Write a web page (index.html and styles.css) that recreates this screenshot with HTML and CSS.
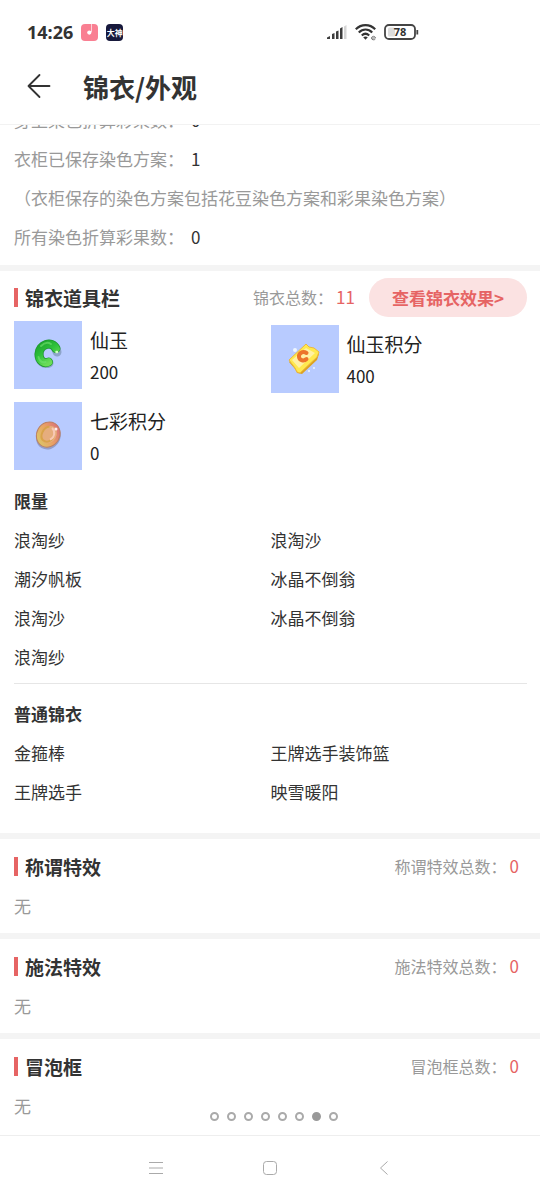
FILE: index.html
```html
<!DOCTYPE html>
<html lang="zh-CN">
<head>
<meta charset="utf-8">
<meta name="viewport" content="width=device-width, initial-scale=1">
<title>锦衣/外观</title>
<link rel="stylesheet" href="styles.css">
</head>
<body>
<div class="status">
  <span class="time">14:26</span>
  <svg class="app" viewBox="0 0 17 17" aria-hidden="true"><rect width="17" height="17" rx="4" fill="#f97f92"/><circle cx="8.3" cy="8.6" r="2.1" fill="#fff"/><path d="M10.5 0v8" stroke="#fff" stroke-width=".8" opacity=".8"/></svg>
  <span class="badge">大神</span>
  <div class="signals">
    <svg width="22" height="18" viewBox="0 0 22 18" aria-hidden="true"><g fill="#3c3c3c"><path d="M1 16v-1.500l3-1.500v3z"/><path d="M6 16v-5l2.500-1v6zM10 16V8.500l2.500-1V16zM14 16V5.500L16.500 4v12z"/></g><path d="M18 16V3.500L20.500 2v14z" fill="#d5d5d5"/></svg>
    <svg width="22" height="18" viewBox="0 0 22 18" fill="none" stroke="#333" stroke-width="2.200" aria-hidden="true"><path d="M.8 6.300c5.500-5.500 14-5.500 19.400 0M3.800 9.500c4-4 9.500-4 13.400 0M6.800 12.500c2.300-2.200 5-2.200 7.400 0"/><path d="M8.200 14.300q2.300-1.800 4.600 0l-2.300 2.500z" fill="#333" stroke="none"/><path d="M16.500 15h4c0-2.200-4-2.200-4 0s2.800 2.200 3.800 1.200" stroke="#777" stroke-width="1"/></svg>
    <svg width="36" height="18" viewBox="0 0 36 18" aria-hidden="true"><rect x="1" y="2" width="30" height="14" rx="4" fill="#fff" stroke="#444" stroke-width="1.800"/><rect x="4" y="4.500" width="7" height="9" rx="1.500" fill="#ddd"/><path d="M33.300 7v4.500" stroke="#444" stroke-width="1.800"/><text x="16" y="13.300" text-anchor="middle" class="charge">78</text></svg>
  </div>
</div>
<header class="header">
  <button class="back" aria-label="返回"><svg width="24" height="26" viewBox="0 0 24 26" fill="none" stroke="#333" stroke-width="1.800" stroke-linecap="round" stroke-linejoin="round"><path d="M22.500 13H1.500M12.500 2L1.500 13l11 11"/></svg></button>
  <h1>锦衣/外观</h1>
</header>
<main class="viewport">
  <div class="content">
    <section class="section">
      <p class="row">身上染色折算彩果数：<b>0</b></p>
      <p class="row">衣柜已保存染色方案：<b>1</b></p>
      <p class="row">（衣柜保存的染色方案包括花豆染色方案和彩果染色方案）</p>
      <p class="row">所有染色折算彩果数：<b>0</b></p>
    </section>
    <section class="section section-wardrobe">
      <div class="head"><h2>锦衣道具栏</h2><span class="count">锦衣总数：<em>11</em></span><button class="effects">查看锦衣效果&gt;</button></div>
      <div class="grid props">
        <div class="prop">
          <svg class="thumb" viewBox="0 0 68 68" aria-hidden="true"><defs><linearGradient id="jade" x1="0" y1="0" x2=".6" y2="1"><stop offset="0" stop-color="#1ea52d"/><stop offset=".5" stop-color="#2fc23c"/><stop offset="1" stop-color="#6bdc58"/></linearGradient></defs><rect width="68" height="68" fill="#b8cbff"/><g fill="none" stroke-linecap="round"><path d="M43 31c-3-13-18-8-18 3 0 6 5 10 10 8" stroke="#627d93" stroke-width="9" opacity=".5"/><path d="M42 27.500c-4-8.500-17-4-17 5.500 0 7 5 10 9.500 8" stroke="#1c9a2d" stroke-width="9"/><path d="M42 27.500c-4-8.500-17-4-17 5.500 0 7 5 10 9.500 8" stroke="url(#jade)" stroke-width="7.500"/><path d="M27 25c3-3 7-4 10-2M24.500 36c1 4 3 6 7 5" stroke="#72e36f" stroke-width="2" opacity=".6"/><path d="M42.500 31h.5" stroke="#d1ffc2" stroke-width="2.500"/></g></svg>
          <div><p class="name">仙玉</p><p class="value">200</p></div>
        </div>
        <div class="prop prop-low">
          <svg class="thumb" viewBox="0 0 68 68" aria-hidden="true"><rect width="68" height="68" fill="#b8cbff"/><path d="M18 37l18-17 3 3 4 2 5 4-2 6-15 14-5-1-2-4z" fill="#dda321"/><path d="M18 35l17-16 3 3 5 1 5 4-2 5-17 16-3-1-2-4z" fill="#ffe94f" stroke="#edb93d"/><path d="M21 35l14-12 9 5-16 15z" fill="#fff1a5"/><path d="M35.500 28c-4-2.500-8 .5-7.500 4s5 4.500 7.500 2" fill="none" stroke="#ec752a" stroke-width="4" stroke-linecap="round"/><g fill="#eef6ff"><circle cx="24" cy="25" r="2"/><circle cx="43" cy="43" r="1"/><circle cx="38" cy="46" r="1"/></g></svg>
          <div><p class="name">仙玉积分</p><p class="value">400</p></div>
        </div>
        <div class="prop">
          <svg class="thumb" viewBox="0 0 68 68" aria-hidden="true"><defs><linearGradient id="shell" x1=".8" y1="0" x2=".2" y2="1"><stop offset="0" stop-color="#d96c7d"/><stop offset=".5" stop-color="#e9a263"/><stop offset="1" stop-color="#d9cb68"/></linearGradient></defs><rect width="68" height="68" fill="#b8cbff"/><g transform="rotate(30 34 33)"><ellipse cx="35" cy="34" rx="12" ry="13.500" fill="#7a80a7" opacity=".6"/><ellipse cx="34" cy="32.500" rx="11.500" ry="13" fill="url(#shell)" stroke="#bc8064"/><ellipse cx="35" cy="32" rx="7" ry="9" fill="#e6ad7d"/><path d="M31 25c-5 4-4 13 1 15 6 1 9-5 7-10" fill="none" stroke="#d9a34a" stroke-width="2"/><path d="M34 25c5 1 7 7 4 11" fill="none" stroke="#f8c8b4" stroke-width="2"/></g><circle cx="42" cy="27" r="1.500" fill="#fff0ed"/></svg>
          <div><p class="name">七彩积分</p><p class="value">0</p></div>
        </div>
      </div>
      <h3>限量</h3>
      <div class="grid names"><p>浪淘纱</p><p>浪淘沙</p><p>潮汐帆板</p><p>冰晶不倒翁</p><p>浪淘沙</p><p>冰晶不倒翁</p><p>浪淘纱</p></div>
      <hr>
      <h3>普通锦衣</h3>
      <div class="grid names"><p>金箍棒</p><p>王牌选手装饰篮</p><p>王牌选手</p><p>映雪暖阳</p></div>
    </section>
    <section class="section">
      <div class="head"><h2>称谓特效</h2><span class="count">称谓特效总数：<em>0</em></span></div>
      <p class="row">无</p>
    </section>
    <section class="section">
      <div class="head"><h2>施法特效</h2><span class="count">施法特效总数：<em>0</em></span></div>
      <p class="row">无</p>
    </section>
    <section class="section">
      <div class="head"><h2>冒泡框</h2><span class="count">冒泡框总数：<em>0</em></span></div>
      <p class="row">无</p>
    </section>
  </div>
  <div class="dots"><i></i><i></i><i></i><i></i><i></i><i></i><i class="on"></i><i></i></div>
</main>
<nav class="nav">
  <button aria-label="菜单"><svg width="16" height="16" viewBox="0 0 16 16"><path d="M1 2.500h14M1 8h14M1 13.500h14"/></svg></button>
  <button aria-label="主页"><svg width="16" height="16" viewBox="0 0 16 16"><rect x="1.500" y="1.500" width="13" height="13" rx="3"/></svg></button>
  <button aria-label="后退"><svg width="16" height="16" viewBox="0 0 16 16"><path d="M11.500 1.500L4.500 8l7 6.500"/></svg></button>
</nav>
</body>
</html>
```
FILE: styles.css
```css
* { box-sizing: border-box; }
body {
  margin: 0;
  height: 100vh;
  display: flex;
  flex-direction: column;
  background: #fff;
  color: #333;
  font: 17px/39px "Noto Sans CJK SC", sans-serif;
}
h1, h2, h3, p { margin: 0; }
button { border: 0; padding: 0; background: none; font: inherit; color: inherit; }
svg { display: block; flex: none; }

.status { display: flex; align-items: center; height: 48px; padding: 16px 120px 0 27px; line-height: 32px; }
.time { font-family: "Noto Sans", sans-serif; font-size: 18px; font-weight: 700; }
.app { width: 17px; height: 17px; margin-left: 8px; }
.badge {
  width: 17px; height: 17px; margin-left: 8px; border-radius: 4px; overflow: hidden;
  background: #17193c; color: #fff; font-size: 8px; font-weight: 700; line-height: 17px; text-align: center;
}
.signals { display: flex; gap: 7px; margin-left: auto; }
.charge { font: 700 11px "Noto Sans", sans-serif; fill: #333; }

.header { display: flex; align-items: center; flex: none; height: 77px; border-bottom: 1px solid #f2f2f2; padding-left: 27px; }
.back { margin-right: 32px; }
h1 { font-size: 26px; font-weight: 700; }

.viewport { position: relative; flex: 1; min-height: 0; overflow: hidden; }
.content { margin-top: -25px; }
.section { padding: 8px 13px 8px 14px; }
.section + .section { border-top: 6px solid #f4f4f4; }
.section:first-child { padding-top: 0; padding-bottom: 9px; }
.section-wardrobe { padding-top: 7px; padding-bottom: 22px; }
.row { color: #999; }
.row b { margin-left: 7px; font-weight: 400; color: #333; }

.head { display: flex; align-items: center; gap: 6px; }
h2 { display: flex; align-items: center; gap: 7px; margin-right: auto; font-size: 19px; }
h2::before { content: ""; width: 4px; height: 19px; background: #e66464; }
.count { padding-right: 8px; color: #999; font-size: 16px; }
.count em { margin-left: 3px; font-size: 17px; font-style: normal; line-height: 1; color: #e66464; }
.effects { padding: 0 23px; border-radius: 20px; background: #fbe2e2; color: #e66464; font-weight: 700; }

.grid { display: grid; grid-template-columns: 1fr 1fr; }
.props { margin: 4px 0 11px; row-gap: 9px; }
.prop { display: flex; gap: 8px; color: #222; line-height: 32px; }
.prop-low { padding-top: 4px; }
.thumb { width: 68px; height: 68px; }
.name { padding-top: 3px; font-size: 19px; }
h3 { font-size: 17px; }
hr { margin: 7px 0 10px; border: 0; border-top: 1px solid #e6e6e6; }

.dots { position: absolute; bottom: 14px; left: 0; right: 0; display: flex; justify-content: center; gap: 8px; padding-left: 8px; }
.dots i { width: 9px; height: 9px; border: 2px solid #aaa; border-radius: 50%; }
.dots .on { background: #999; border-color: #999; }

.nav { display: flex; align-items: center; justify-content: center; gap: 98px; flex: none; height: 65px; border-top: 1px solid #eee; }
.nav svg { fill: none; stroke: #aaa; stroke-width: 1; }
```
